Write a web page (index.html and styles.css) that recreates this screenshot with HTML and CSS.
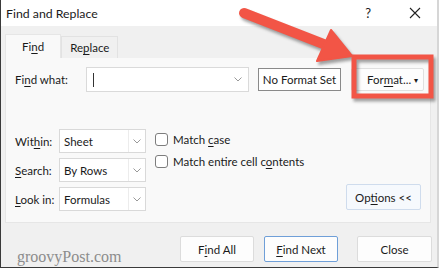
FILE: index.html
```html
<!DOCTYPE html>
<html lang="en">
<head>
  <meta charset="UTF-8" />
  <title>Find and Replace</title>
  <link rel="stylesheet" href="styles.css">
</head>
<body>

  <div class="dialog">
    <!-- Title bar -->
    <div class="titlebar">
      <span class="title">Find and Replace</span>
      <span class="help">?</span>
      <svg class="close-x" width="12" height="12" viewBox="0 0 12 12">
        <path d="M1 1 L11 11 M11 1 L1 11" stroke="#222" stroke-width="1.1" fill="none"/>
      </svg>
    </div>

    <!-- Tabs -->
    <div class="tabs">
      <div class="tab active">Fi<u>n</u>d</div>
      <div class="tab">Re<u>p</u>lace</div>
    </div>

    <!-- Panel -->
    <div class="panel">
      <div class="find-row">
        <label class="lbl find-lbl">Fi<u>n</u>d what:</label>
        <div class="combo find-combo">
          <span class="caret"></span>
          <svg class="chev" width="8" height="5" viewBox="0 0 8 5"><path d="M0.5 0.5 L4 4 L7.5 0.5" stroke="#999" fill="none"/></svg>
        </div>
        <button class="btn no-format">No Format Set</button>
        <button class="btn format"><span>For<u>m</u>at...</span><span class="drop">▾</span></button>
      </div>

      <div class="options">
        <div class="opt-grid">
          <label class="lbl">Wit<u>h</u>in:</label>
          <div class="select"><span class="val">Sheet</span><span class="sel-btn"><svg width="8" height="5" viewBox="0 0 8 5"><path d="M0.5 0.5 L4 4 L7.5 0.5" stroke="#999" fill="none"/></svg></span></div>
          <label class="lbl"><u>S</u>earch:</label>
          <div class="select"><span class="val">By Rows</span><span class="sel-btn"><svg width="8" height="5" viewBox="0 0 8 5"><path d="M0.5 0.5 L4 4 L7.5 0.5" stroke="#999" fill="none"/></svg></span></div>
          <label class="lbl"><u>L</u>ook in:</label>
          <div class="select"><span class="val">Formulas</span><span class="sel-btn"><svg width="8" height="5" viewBox="0 0 8 5"><path d="M0.5 0.5 L4 4 L7.5 0.5" stroke="#999" fill="none"/></svg></span></div>
        </div>

        <div class="checks">
          <label class="check"><span class="box"></span><span>Match <u>c</u>ase</span></label>
          <label class="check"><span class="box"></span><span>Match entire cell c<u>o</u>ntents</span></label>
        </div>

        <button class="btn options-btn">Op<u>t</u>ions &lt;&lt;</button>
      </div>
    </div>

    <!-- Footer -->
    <div class="footer">
      <span class="watermark">groovyPost.com</span>
      <button class="btn foot-btn find-all">F<u>i</u>nd All</button>
      <button class="btn foot-btn find-next"><u>F</u>ind Next</button>
      <button class="btn foot-btn close">Close</button>
    </div>
  </div>

  <!-- Annotation overlay -->
  <svg class="annotation" width="439" height="268" viewBox="0 0 439 268">
    <defs>
      <filter id="shadow" x="-20%" y="-20%" width="140%" height="140%">
        <feGaussianBlur stdDeviation="1.5"/>
      </filter>
    </defs>
    <g fill="#555" stroke="#555" opacity="0.55" filter="url(#shadow)" transform="translate(2,3)">
      <line x1="244" y1="13" x2="326" y2="45" stroke-width="10" stroke-linecap="round"/>
      <polygon points="317,61 331,30 352,56" stroke-width="2" stroke-linejoin="round"/>
      <rect x="354" y="57" width="77" height="39" fill="none" stroke-width="5"/>
    </g>
    <g fill="#f25546" stroke="#f25546">
      <line x1="244" y1="13" x2="326" y2="45" stroke-width="10" stroke-linecap="round"/>
      <polygon points="317,61 331,30 352,56" stroke-width="2" stroke-linejoin="round"/>
      <rect x="354" y="57" width="77" height="39" fill="none" stroke-width="5"/>
    </g>
  </svg>

</body>
</html>
```

FILE: styles.css
```css
* {
  box-sizing: border-box;
}

body {
  margin: 0;
  width: 439px;
  height: 268px;
  overflow: hidden;
  position: relative;
  font-family: 'Lato', 'Noto Sans', sans-serif;
  font-size: 11.5px;
  color: #1a1a1a;
  background: #fff;
}

u {
  text-decoration-thickness: 1px;
  text-underline-offset: 2px;
}

.dialog {
  width: 439px;
  height: 268px;
  display: flex;
  flex-direction: column;
  background: #f0f0f0;
  border-left: 1px solid #3a3a3a;
  border-bottom: 1px solid #3a3a3a;
  border-right: 2px solid #d6d6d6;
}

/* title bar */
.titlebar {
  height: 26px;
  background: #fff;
  display: flex;
  align-items: center;
  padding: 0 0 0 5px;
}

.title {
  font-size: 12.3px;
  flex: 1;
}

.help {
  font-size: 13px;
  margin-right: 38px;
}

.close-x {
  margin-right: 16px;
}

/* tabs */
.tabs {
  display: flex;
  align-items: flex-end;
  padding: 8px 0 0 4px;
  height: 32px;
}

.tab {
  height: 22px;
  padding: 0 8px;
  display: flex;
  align-items: center;
  background: #f0f0f0;
  border: 1px solid #e2e2e2;
  border-bottom: none;
}

.tab.active {
  height: 24px;
  padding: 0 16px;
  background: #f9f9f9;
  border-color: #e6e6e6;
}

/* panel */
.panel {
  margin: 0 6px 0 4px;
  height: 165px;
  background: #f9f9f9;
  border: 1px solid #e6e6e6;
  border-top: none;
  padding: 9px 0 0 9px;
  display: flex;
  flex-direction: column;
}

.lbl {
  white-space: nowrap;
}

.find-row {
  display: flex;
  align-items: center;
  height: 25px;
}

.find-lbl {
  width: 71px;
}

.combo {
  width: 163px;
  height: 25px;
  background: #fff;
  border: 1px solid #dadada;
  display: flex;
  align-items: center;
  padding: 0 6px;
}

.caret {
  width: 1px;
  height: 14px;
  background: #333;
}

.combo .chev {
  margin-left: auto;
}

.btn {
  font-family: inherit;
  font-size: 11.5px;
  color: #1a1a1a;
  height: 23px;
  padding: 0;
  white-space: nowrap;
  background: #fdfdfd;
  border: 1px solid #d0d0d0;
  border-radius: 2px;
}

.no-format {
  width: 83px;
  margin-left: 9px;
  background: #fff;
  border-color: #8a8a8a;
  border-radius: 0;
}

.format {
  width: 73px;
  margin-left: 10px;
  display: flex;
  align-items: center;
  justify-content: space-between;
  padding: 0 5px 0 15px;
  border-color: #e0e0e0;
}

.drop {
  font-size: 8px;
}

/* options */
.options {
  margin-top: 37px;
  display: flex;
  align-items: flex-start;
}

.opt-grid {
  display: grid;
  grid-template-columns: 44px 87px;
  row-gap: 5px;
  align-items: center;
}

.select {
  height: 24px;
  background: #fff;
  border: 1px solid #d9d9d9;
  display: flex;
  align-items: center;
}

.select .val {
  flex: 1;
  padding-left: 4px;
}

.sel-btn {
  width: 17px;
  height: 100%;
  border-left: 1px solid #ececec;
  display: flex;
  align-items: center;
  justify-content: center;
}

.checks {
  display: flex;
  flex-direction: column;
  gap: 9px;
  margin-left: 9px;
  padding-top: 4px;
}

.check {
  display: flex;
  align-items: center;
  gap: 5px;
  white-space: nowrap;
}

.box {
  width: 13px;
  height: 13px;
  border: 1px solid #7d7d7d;
  border-radius: 3px;
  background: #fff;
}

.options-btn {
  width: 75px;
  height: 26px;
  margin: 55px 9px 0 auto;
  background: #f6f9fd;
  border-color: #cfdced;
}

/* footer */
.footer {
  display: flex;
  align-items: center;
  margin-top: 9px;
  padding-right: 5px;
}

.watermark {
  font-family: 'Liberation Serif', serif;
  font-size: 16px;
  color: #8c8c8c;
  margin-left: 16px;
  margin-top: 16px;
  flex: 1;
}

.foot-btn {
  width: 74px;
  height: 26px;
  border-color: #dcdcdc;
}

.find-next {
  margin-left: 10px;
  border-color: #6f9fd8;
}

.close {
  margin-left: 19px;
  width: 75px;
}

.annotation {
  position: absolute;
  top: 0;
  left: 0;
}
```
